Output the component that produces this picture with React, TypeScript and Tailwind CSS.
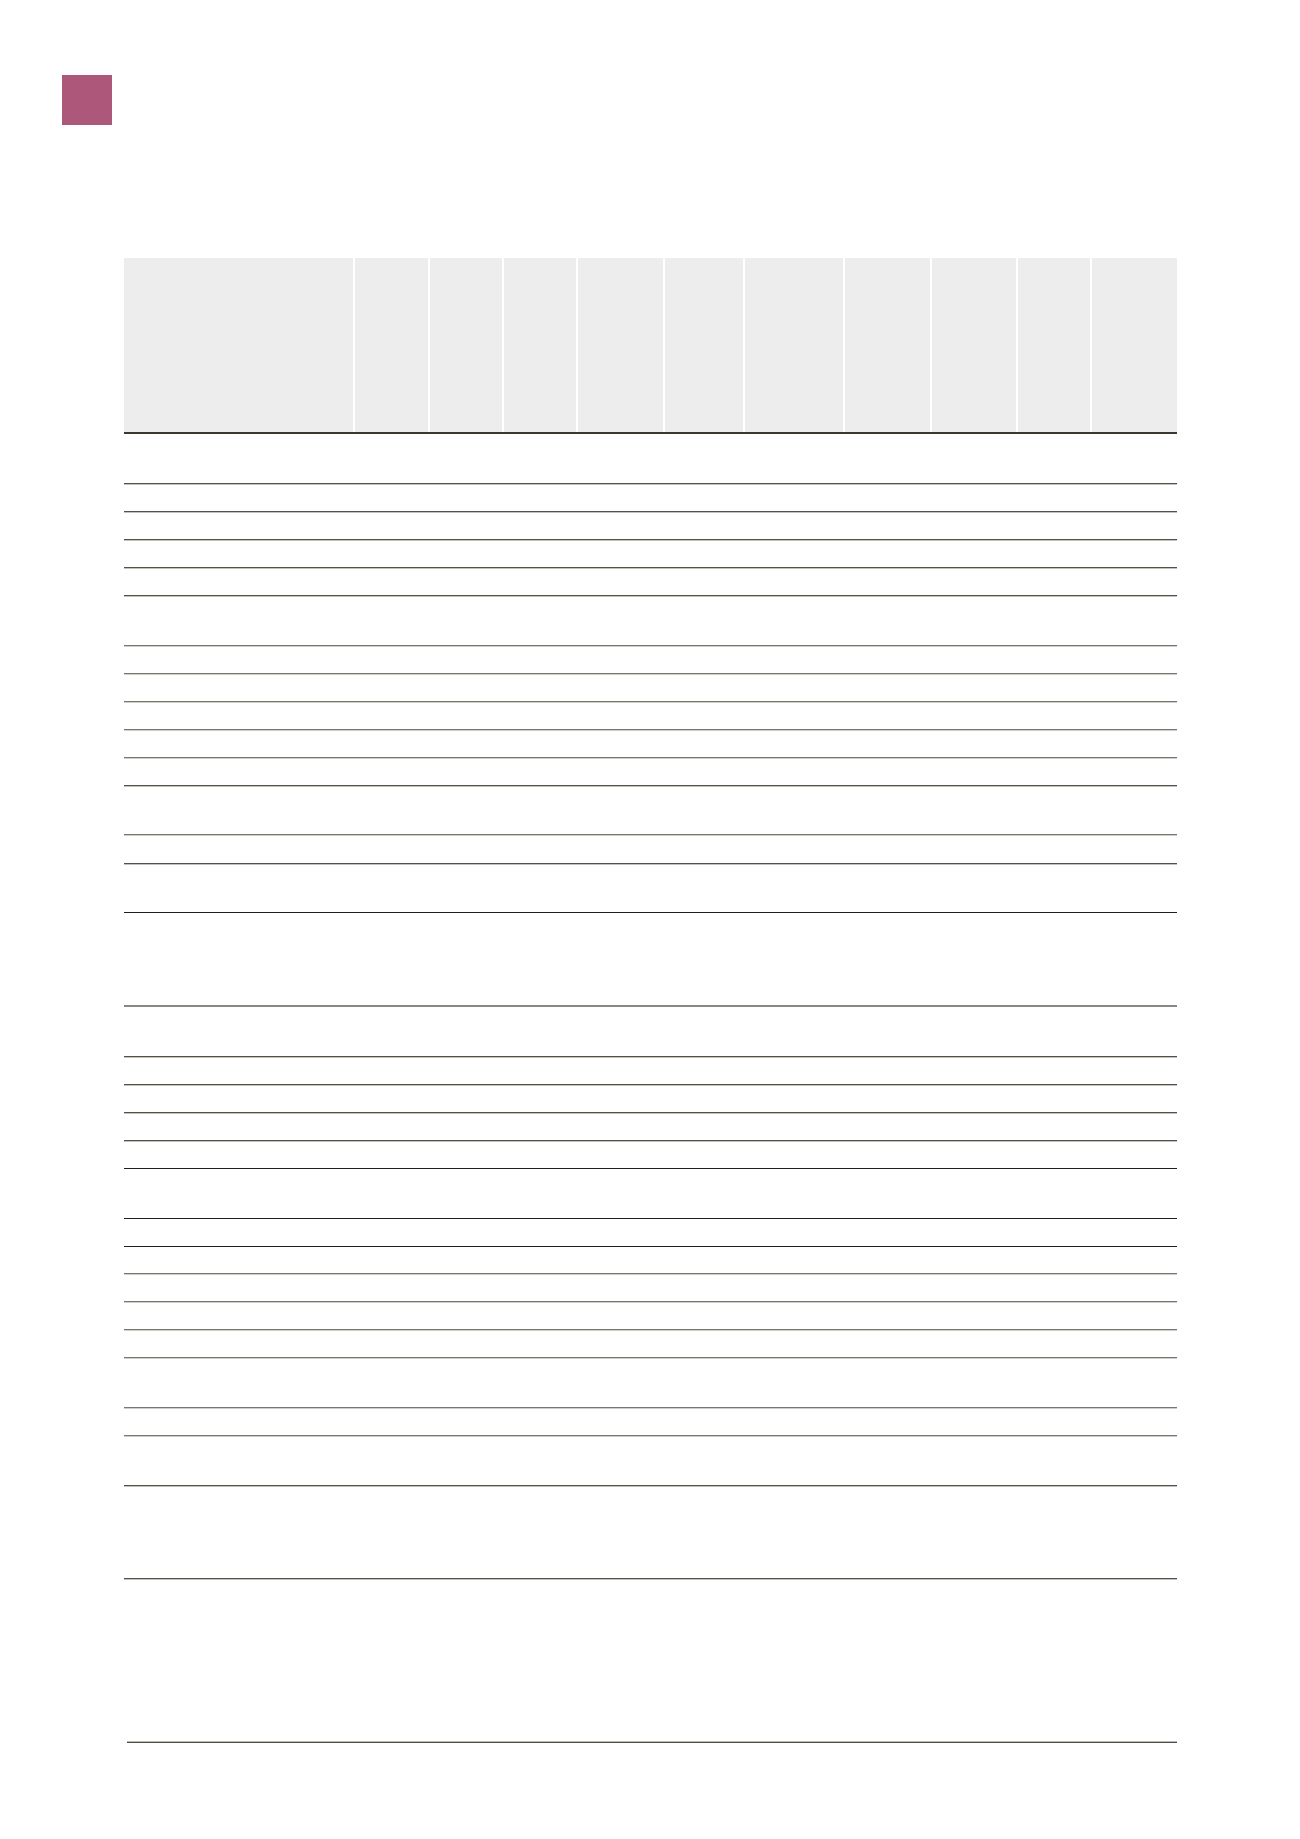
const cols = [229, 75, 74, 74, 87, 80, 100, 87, 86, 74, 87];

type Line = "dark" | "grey" | "black" | "greyThick";

// [row height incl. its bottom rule, rule style]
const rows: [number, Line][] = [
  [50, "dark"],
  [28, "dark"],
  [28, "dark"],
  [28, "dark"],
  [28, "dark"],
  [50, "grey"],
  [28, "grey"],
  [28, "grey"],
  [28, "grey"],
  [28, "grey"],
  [28, "dark"],
  [49, "grey"],
  [29, "dark"],
  [49, "black"],
  [94, "greyThick"],
  [50, "dark"],
  [28, "dark"],
  [28, "dark"],
  [28, "dark"],
  [28, "black"],
  [50, "black"],
  [28, "black"],
  [27, "grey"],
  [28, "grey"],
  [28, "grey"],
  [28, "grey"],
  [50, "grey"],
  [28, "grey"],
  [50, "dark"],
  [93, "dark"],
];

const lineClass: Record<Line, string> = {
  dark: "border-b border-[#55514a] shadow-[0_1px_0_#c4c1bb]",
  grey: "border-b border-[#7a7670] shadow-[0_1px_0_#cfccc8]",
  black: "border-b border-[#1f1e1a]",
  greyThick: "border-b-2 border-[#8a8681]",
};

const Row = ({ height, line }: { height: number; line: Line }) => (
  <div className={`flex ${lineClass[line]}`} style={{ height }}>
    {cols.map((w, i) => (
      <div key={i} className="h-full" style={{ width: w }} />
    ))}
  </div>
);

export default function App() {
  return (
    <div className="relative w-[1300px] h-[1839px] bg-white font-['Liberation_Sans',sans-serif] overflow-hidden">
      <div className="pt-[75px] pl-[62px]">
        <div className="w-[50px] h-[50px] bg-[#ad577a]" />
      </div>

      <div className="mt-[133px] ml-[124px] w-[1053px]">
        {/* header band */}
        <div className="flex h-[176px] border-b-2 border-[#3d392f] shadow-[0_-1px_0_#aaa69f_inset]">
          {cols.map((w, i) => (
            <div
              key={i}
              className={`h-full bg-[#ededed] ${i > 0 ? "border-l-2 border-white" : ""}`}
              style={{ width: w }}
            />
          ))}
        </div>

        {rows.map(([h, line], i) => (
          <Row key={i} height={h} line={line} />
        ))}
      </div>

      <div className="absolute left-[127px] top-[1741px] w-[1050px] h-[2px] border-t border-[#c0bdb7] bg-[#4f4b42]" />
    </div>
  );
}
